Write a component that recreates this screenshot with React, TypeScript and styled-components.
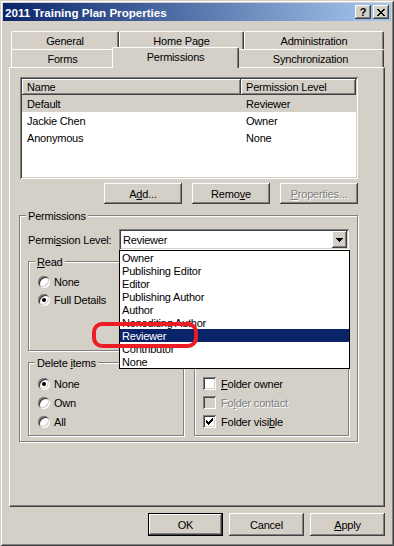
import React from "react";
import styled, { createGlobalStyle, css } from "styled-components";

const FACE = "#d4d0c8";
const LIGHT = "#ffffff";
const SHADOW = "#808080";
const DARK = "#404040";
const NAVY = "#0a246a";

const GlobalStyle = createGlobalStyle`
  * { box-sizing: border-box; }
  html, body { margin: 0; padding: 0; background: ${FACE}; }
  body {
    font-family: "Liberation Sans", Arial, sans-serif;
    font-size: 11px;
    letter-spacing: -0.2px;
    color: #000;
  }
  u { text-decoration-thickness: 1px; text-underline-offset: 1px; }
`;

const raised = css`
  box-shadow: inset -1px -1px 0 ${DARK}, inset 1px 1px 0 ${LIGHT},
    inset -2px -2px 0 ${SHADOW}, inset 2px 2px 0 ${FACE};
`;

const sunken = css`
  box-shadow: inset 1px 1px 0 ${SHADOW}, inset -1px -1px 0 ${LIGHT},
    inset 2px 2px 0 ${DARK}, inset -2px -2px 0 ${FACE};
`;

const Window = styled.div`
  position: relative;
  width: 394px;
  height: 546px;
  padding: 3px;
  display: flex;
  flex-direction: column;
  background: ${FACE};
  box-shadow: inset 1px 1px 0 ${FACE}, inset -1px -1px 0 ${DARK},
    inset 2px 2px 0 ${LIGHT}, inset -2px -2px 0 ${SHADOW};
`;

const TitleBar = styled.div`
  height: 18px;
  flex: none;
  display: flex;
  align-items: center;
  padding: 0 2px;
  background: linear-gradient(to right, ${NAVY}, #a6caf0);
`;

const TitleText = styled.div`
  flex: 1;
  padding-left: 0;
  color: #fff;
  font-weight: bold;
  font-size: 11.6px;
  letter-spacing: 0;
  white-space: nowrap;
`;

const CaptionButtons = styled.div`
  display: flex;
  gap: 2px;
`;

const CaptionButton = styled.div`
  width: 16px;
  height: 14px;
  display: flex;
  align-items: center;
  justify-content: center;
  background: ${FACE};
  ${raised}
  font-weight: bold;
  font-size: 11px;
  line-height: 1;
  letter-spacing: 0;
  color: #000;
`;

const Body = styled.div`
  flex: 1;
  display: flex;
  flex-direction: column;
  padding: 10px 6px 0;
`;

const TabStrip = styled.div`
  display: flex;
  flex-direction: column;
  padding-left: 2px;
`;

const TabRow = styled.div`
  display: flex;
  align-items: flex-end;
  height: 18px;
`;

const Tab = styled.div<{ $w: number; $active?: boolean }>`
  flex: none;
  width: ${(p) => p.$w}px;
  height: ${(p) => (p.$active ? 21 : 18)}px;
  margin: 0 ${(p) => (p.$active ? -2 : 0)}px ${(p) => (p.$active ? -1 : 0)}px;
  padding-bottom: ${(p) => (p.$active ? 2 : 0)}px;
  display: flex;
  align-items: center;
  justify-content: center;
  background: ${FACE};
  border-top: 1px solid ${LIGHT};
  border-left: 1px solid ${LIGHT};
  border-right: 1px solid ${DARK};
  border-radius: 2px 2px 0 0;
  box-shadow: inset -1px 0 0 ${SHADOW};
  position: relative;
  z-index: ${(p) => (p.$active ? 2 : 1)};
  white-space: nowrap;
`;

const Panel = styled.div`
  width: 376px;
  height: 440px;
  flex: none;
  background: ${FACE};
  border-top: 1px solid ${LIGHT};
  border-left: 1px solid ${LIGHT};
  border-right: 1px solid ${DARK};
  border-bottom: 1px solid ${DARK};
  box-shadow: inset -1px -1px 0 ${SHADOW};
  padding: 9px 0 0 10px;
  display: flex;
  flex-direction: column;
  align-items: flex-start;
`;

const ListView = styled.div`
  width: 338px;
  height: 102px;
  padding: 2px;
  background: #fff;
  ${sunken}
  display: flex;
  flex-direction: column;
`;

const ListHeader = styled.div`
  display: flex;
  height: 16px;
  flex: none;
`;

const HeaderCell = styled.div<{ $w: number }>`
  width: ${(p) => p.$w}px;
  flex: none;
  display: flex;
  align-items: center;
  padding-left: 5px;
  background: ${FACE};
  box-shadow: inset -1px -1px 0 ${DARK}, inset 1px 1px 0 ${LIGHT},
    inset -2px -2px 0 ${SHADOW};
  white-space: nowrap;
`;

const ListRow = styled.div<{ $selected?: boolean }>`
  display: flex;
  height: 17px;
  flex: none;
  align-items: center;
  background: ${(p) => (p.$selected ? FACE : "transparent")};
`;

const Cell = styled.div<{ $w: number }>`
  width: ${(p) => p.$w}px;
  flex: none;
  padding-left: 5px;
  white-space: nowrap;
`;

const ButtonRow = styled.div`
  width: 338px;
  margin-top: 4px;
  display: flex;
  justify-content: flex-end;
  gap: 10px;
`;

const PushButton = styled.div<{ $w: number; $h: number; $default?: boolean; $disabled?: boolean }>`
  width: ${(p) => p.$w}px;
  height: ${(p) => p.$h}px;
  flex: none;
  display: flex;
  align-items: center;
  justify-content: center;
  background: ${FACE};
  white-space: nowrap;
  color: ${(p) => (p.$disabled ? SHADOW : "#000")};
  text-shadow: ${(p) => (p.$disabled ? `1px 1px 0 ${LIGHT}` : "none")};
  ${(p) =>
    p.$default
      ? css`
          box-shadow: inset 0 0 0 1px #000, inset -2px -2px 0 ${DARK},
            inset 2px 2px 0 ${LIGHT}, inset -3px -3px 0 ${SHADOW};
        `
      : raised}
`;

const PermGroup = styled.div`
  width: 339px;
  margin: 11px 0 0 -1px;
  padding-bottom: 5px;
  border: 1px solid ${SHADOW};
  box-shadow: inset 1px 1px 0 ${LIGHT}, 1px 1px 0 ${LIGHT};
  display: flex;
  flex-direction: column;
`;

const GroupCaption = styled.div`
  align-self: flex-start;
  margin: -6px 0 0 6px;
  padding: 0 2px;
  line-height: 13px;
  background: ${FACE};
  white-space: nowrap;
`;

const LevelRow = styled.div`
  display: flex;
  align-items: center;
  margin-top: 6px;
  padding-left: 8px;
`;

const LevelLabel = styled.div`
  width: 91px;
  flex: none;
  white-space: nowrap;
`;

const Combo = styled.div`
  position: relative;
  z-index: 5;
  width: 230px;
  height: 21px;
`;

const ComboField = styled.div`
  height: 100%;
  display: flex;
  align-items: center;
  padding: 2px;
  background: #fff;
  ${sunken}
`;

const ComboText = styled.div`
  flex: 1;
  padding-left: 2px;
`;

const ComboButton = styled.div`
  width: 15px;
  height: 17px;
  flex: none;
  display: flex;
  align-items: center;
  justify-content: center;
  background: ${FACE};
  ${raised}
`;

const DropList = styled.div`
  position: absolute;
  top: 100%;
  left: 0;
  width: 231px;
  background: #fff;
  border: 1px solid #000;
  display: flex;
  flex-direction: column;
`;

const DropItem = styled.div<{ $selected?: boolean }>`
  height: 13px;
  line-height: 15px;
  padding-left: 2px;
  white-space: nowrap;
  background: ${(p) => (p.$selected ? NAVY : "transparent")};
  color: ${(p) => (p.$selected ? "#fff" : "#000")};
`;

const GroupGrid = styled.div`
  display: grid;
  grid-template-columns: 156px 155px;
  grid-template-rows: 90px 74px;
  column-gap: 10px;
  row-gap: 11px;
  margin-top: 11px;
  padding-left: 8px;
`;

const SubGroup = styled.div`
  border: 1px solid ${SHADOW};
  box-shadow: inset 1px 1px 0 ${LIGHT}, 1px 1px 0 ${LIGHT};
  display: flex;
  flex-direction: column;
`;

const OptionList = styled.div<{ $indent: number }>`
  display: flex;
  flex-direction: column;
  margin-top: 4px;
  padding-left: ${(p) => p.$indent}px;
`;

const OptionRow = styled.div<{ $h: number; $gap: number; $disabled?: boolean }>`
  height: ${(p) => p.$h}px;
  display: flex;
  align-items: center;
  gap: ${(p) => p.$gap}px;
  white-space: nowrap;
  color: ${(p) => (p.$disabled ? SHADOW : "#000")};
  text-shadow: ${(p) => (p.$disabled ? `1px 1px 0 ${LIGHT}` : "none")};
`;

const Radio = styled.span<{ $on?: boolean }>`
  width: 12px;
  height: 12px;
  flex: none;
  border-radius: 50%;
  background: #fff;
  display: flex;
  align-items: center;
  justify-content: center;
  box-shadow: inset 1px 1px 0 ${SHADOW}, inset -1px -1px 0 ${LIGHT},
    inset 2px 2px 0 ${DARK}, inset -2px -2px 0 ${FACE};
  &::after {
    content: "";
    width: 4px;
    height: 4px;
    border-radius: 50%;
    background: #000;
    display: ${(p) => (p.$on ? "block" : "none")};
  }
`;

const CheckBox = styled.span<{ $disabled?: boolean }>`
  width: 13px;
  height: 13px;
  flex: none;
  display: flex;
  align-items: center;
  justify-content: center;
  background: ${(p) => (p.$disabled ? FACE : "#fff")};
  ${sunken}
`;

const DialogButtons = styled.div`
  display: flex;
  justify-content: flex-end;
  gap: 6px;
  margin-top: 6px;
`;

const Annotation = styled.div`
  position: absolute;
  left: 92px;
  top: 322px;
  width: 106px;
  height: 26px;
  border: 4px solid #ec1c24;
  border-radius: 10px;
  pointer-events: none;
  z-index: 20;
`;

const CloseIcon = () => (
  <svg width="8" height="7" viewBox="0 0 8 7" shapeRendering="crispEdges">
    <path
      d="M0 0h2v1h1v1h2V1h1V0h2v1H7v1H6v1H5v1h1v1h1v1h1v1H6V6H5V5H3v1H2v1H0V6h1V5h1V4h1V3H2V2H1V1H0z"
      fill="#000"
    />
  </svg>
);

const Triangle = () => (
  <svg width="7" height="4" viewBox="0 0 7 4" shapeRendering="crispEdges">
    <path d="M0 0h7v1H6v1H5v1H4v1H3V3H2V2H1V1H0z" fill="#000" />
  </svg>
);

const CheckMark = () => (
  <svg width="7" height="7" viewBox="0 0 7 7" shapeRendering="crispEdges">
    <path
      d="M6 0h1v1H6z M5 1h2v1H5z M0 2h1v1H0z M4 2h3v1H4z M0 3h2v1H0z M3 3h3v1H3z M0 4h5v1H0z M1 5h3v1H1z M2 6h1v1H2z"
      fill="#000"
    />
  </svg>
);

const rows = [
  { name: "Default", level: "Reviewer", selected: true },
  { name: "Jackie Chen", level: "Owner" },
  { name: "Anonymous", level: "None" },
];

const levels = [
  "Owner",
  "Publishing Editor",
  "Editor",
  "Publishing Author",
  "Author",
  "Nonediting Author",
  "Reviewer",
  "Contributor",
  "None",
];

export default function App() {
  return (
    <>
      <GlobalStyle />
      <Window>
        <TitleBar>
          <TitleText>2011 Training Plan Properties</TitleText>
          <CaptionButtons>
            <CaptionButton>?</CaptionButton>
            <CaptionButton>
              <CloseIcon />
            </CaptionButton>
          </CaptionButtons>
        </TitleBar>
        <Body>
          <TabStrip>
            <TabRow>
              <Tab $w={108}>General</Tab>
              <Tab $w={125}>Home Page</Tab>
              <Tab $w={140}>Administration</Tab>
            </TabRow>
            <TabRow>
              <Tab $w={103}>Forms</Tab>
              <Tab $w={127} $active>
                Permissions
              </Tab>
              <Tab $w={147}>Synchronization</Tab>
            </TabRow>
          </TabStrip>
          <Panel>
            <ListView>
              <ListHeader>
                <HeaderCell $w={219}>Name</HeaderCell>
                <HeaderCell $w={115}>Permission Level</HeaderCell>
              </ListHeader>
              {rows.map((r) => (
                <ListRow key={r.name} $selected={r.selected}>
                  <Cell $w={219}>{r.name}</Cell>
                  <Cell $w={115}>{r.level}</Cell>
                </ListRow>
              ))}
            </ListView>
            <ButtonRow>
              <PushButton $w={78} $h={21}>
                <span>
                  A<u>d</u>d...
                </span>
              </PushButton>
              <PushButton $w={78} $h={21}>
                <span>
                  Remo<u>v</u>e
                </span>
              </PushButton>
              <PushButton $w={78} $h={21} $disabled>
                <span>
                  <u>P</u>roperties...
                </span>
              </PushButton>
            </ButtonRow>
            <PermGroup>
              <GroupCaption>Permissions</GroupCaption>
              <LevelRow>
                <LevelLabel>
                  Permi<u>s</u>sion Level:
                </LevelLabel>
                <Combo>
                  <ComboField>
                    <ComboText>Reviewer</ComboText>
                    <ComboButton>
                      <Triangle />
                    </ComboButton>
                  </ComboField>
                  <DropList>
                    {levels.map((l) => (
                      <DropItem key={l} $selected={l === "Reviewer"}>
                        {l}
                      </DropItem>
                    ))}
                  </DropList>
                </Combo>
              </LevelRow>
              <GroupGrid>
                <SubGroup>
                  <GroupCaption>
                    <u>R</u>ead
                  </GroupCaption>
                  <OptionList $indent={9}>
                    <OptionRow $h={18} $gap={4}>
                      <Radio />
                      None
                    </OptionRow>
                    <OptionRow $h={18} $gap={4}>
                      <Radio $on />
                      Full Details
                    </OptionRow>
                  </OptionList>
                </SubGroup>
                <SubGroup>
                  <GroupCaption>
                    <u>W</u>rite
                  </GroupCaption>
                  <OptionList $indent={8}>
                    <OptionRow $h={18} $gap={5}>
                      <CheckBox />
                      Create items
                    </OptionRow>
                    <OptionRow $h={18} $gap={5}>
                      <CheckBox />
                      Create subfolders
                    </OptionRow>
                    <OptionRow $h={18} $gap={5}>
                      <CheckBox />
                      Edit own
                    </OptionRow>
                    <OptionRow $h={18} $gap={5}>
                      <CheckBox />
                      Edit all
                    </OptionRow>
                  </OptionList>
                </SubGroup>
                <SubGroup>
                  <GroupCaption>
                    Delete <u>i</u>tems
                  </GroupCaption>
                  <OptionList $indent={9}>
                    <OptionRow $h={19} $gap={4}>
                      <Radio $on />
                      None
                    </OptionRow>
                    <OptionRow $h={19} $gap={4}>
                      <Radio />
                      Own
                    </OptionRow>
                    <OptionRow $h={19} $gap={4}>
                      <Radio />
                      All
                    </OptionRow>
                  </OptionList>
                </SubGroup>
                <SubGroup>
                  <GroupCaption>Other</GroupCaption>
                  <OptionList $indent={8}>
                    <OptionRow $h={19} $gap={5}>
                      <CheckBox />
                      <span>
                        <u>F</u>older owner
                      </span>
                    </OptionRow>
                    <OptionRow $h={19} $gap={5} $disabled>
                      <CheckBox $disabled />
                      <span>
                        Fo<u>l</u>der contact
                      </span>
                    </OptionRow>
                    <OptionRow $h={19} $gap={5}>
                      <CheckBox>
                        <CheckMark />
                      </CheckBox>
                      <span>
                        Folder visi<u>b</u>le
                      </span>
                    </OptionRow>
                  </OptionList>
                </SubGroup>
              </GroupGrid>
            </PermGroup>
          </Panel>
          <DialogButtons>
            <PushButton $w={75} $h={23} $default>
              OK
            </PushButton>
            <PushButton $w={75} $h={23}>
              Cancel
            </PushButton>
            <PushButton $w={75} $h={23}>
              <span>
                <u>A</u>pply
              </span>
            </PushButton>
          </DialogButtons>
        </Body>
        <Annotation />
      </Window>
    </>
  );
}
